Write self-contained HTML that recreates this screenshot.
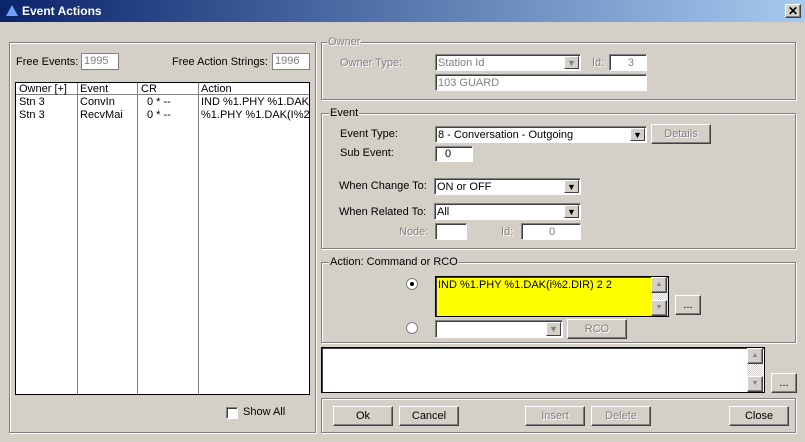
<!DOCTYPE html>
<html><head><style>
*{box-sizing:border-box;margin:0;padding:0}
body{width:805px;height:442px;background:#d4d0c8;font:11px "Liberation Sans",sans-serif;position:relative;overflow:hidden;color:#000}
.a{position:absolute}
.title{left:0;top:0;width:805px;height:22px;background:linear-gradient(90deg,#0a246a,#a6caf0);color:#fff;font-weight:bold;font-size:12px;line-height:22px;padding-left:22px}
.grp{border:1px solid #808080;box-shadow:1px 1px 0 #fff,inset 1px 1px 0 #fff}
.lg{background:#d4d0c8;padding:0 1px;line-height:12px}
.in{background:#fff;border:1px solid #808080;border-right-color:#fff;border-bottom-color:#fff;box-shadow:inset 1px 1px 0 #404040;line-height:16px;padding-left:2px;white-space:nowrap;overflow:hidden}
.dis{color:#808080}
.btn{background:#d4d0c8;border:1px solid;border-color:#fff #404040 #404040 #fff;box-shadow:inset -1px -1px 0 #808080;text-align:center;line-height:18px}
.dd{position:absolute;right:1px;top:1px;bottom:1px;width:15px;background:#d4d0c8;border:1px solid;border-color:#fff #404040 #404040 #fff;font-size:9px;text-align:center;line-height:13px}
.gt{color:#808080;text-shadow:1px 1px 0 #fff}
</style></head><body>
<div class="a title">Event Actions</div>
<div class="a" style="left:6px;top:5px;width:0;height:0;border-left:6px solid transparent;border-right:6px solid transparent;border-bottom:11px solid #6fa0ff"></div>
<div class="a btn" style="left:785px;top:4px;width:16px;height:14px;line-height:12px;font-weight:bold;font-size:12px">✕</div>

<div class="a grp" style="left:9px;top:42px;width:307px;height:391px"></div>
<div class="a" style="left:16px;top:56px">Free Events:</div>
<div class="a in dis" style="left:81px;top:53px;width:38px;height:17px;box-shadow:none;border:1px solid #808080;line-height:15px">1995</div>
<div class="a" style="left:172px;top:56px">Free Action Strings:</div>
<div class="a in dis" style="left:272px;top:53px;width:38px;height:17px;box-shadow:none;border:1px solid #808080;line-height:15px">1996</div>
<div class="a" style="left:15px;top:82px;width:295px;height:313px;background:#fff;border:1px solid #000"></div>
<div class="a" style="left:16px;top:83px;width:293px;height:12px;border-bottom:1px solid #808080"></div>
<div class="a" style="left:77px;top:83px;width:1px;height:311px;background:#808080"></div>
<div class="a" style="left:137px;top:83px;width:1px;height:311px;background:#808080"></div>
<div class="a" style="left:198px;top:83px;width:1px;height:311px;background:#808080"></div>
<div class="a" style="left:19px;top:82px;line-height:14px">Owner [+]</div>
<div class="a" style="left:80px;top:82px;line-height:14px">Event</div>
<div class="a" style="left:141px;top:82px;line-height:14px">CR</div>
<div class="a" style="left:201px;top:82px;line-height:14px">Action</div>
<div class="a" style="left:19px;top:96px;line-height:13px">Stn 3<br>Stn 3</div>
<div class="a" style="left:80px;top:96px;line-height:13px">ConvIn<br>RecvMai</div>
<div class="a" style="left:147px;top:96px;line-height:13px">0 * --<br>0 * --</div>
<div class="a" style="left:201px;top:96px;width:108px;overflow:hidden;white-space:nowrap;line-height:13px">IND %1.PHY %1.DAK(I<br>%1.PHY %1.DAK(I%2.I</div>
<div class="a" style="left:226px;top:407px;width:12px;height:12px;background:#fff;border:1px solid;border-color:#808080 #fff #fff #808080;box-shadow:inset 1px 1px 0 #404040"></div>
<div class="a" style="left:243px;top:406px">Show All</div>

<!-- Owner -->
<div class="a grp" style="left:321px;top:42px;width:475px;height:58px"></div>
<div class="a lg gt" style="left:327px;top:36px">Owner</div>
<div class="a gt" style="left:340px;top:57px">Owner Type:</div>
<div class="a in dis" style="left:435px;top:54px;width:146px;height:17px">Station Id<div class="dd" style="color:#808080">▼</div></div>
<div class="a gt" style="left:592px;top:57px">Id:</div>
<div class="a in dis" style="left:609px;top:54px;width:38px;height:17px;text-align:right;padding-right:12px">3</div>
<div class="a in dis" style="left:435px;top:74px;width:212px;height:17px">103 GUARD</div>

<!-- Event -->
<div class="a grp" style="left:321px;top:113px;width:475px;height:136px"></div>
<div class="a lg" style="left:329px;top:107px">Event</div>
<div class="a" style="left:340px;top:128px">Event Type:</div>
<div class="a in" style="left:435px;top:126px;width:212px;height:17px">8 - Conversation - Outgoing<div class="dd">▼</div></div>
<div class="a btn gt" style="left:651px;top:124px;width:60px;height:20px">Details</div>
<div class="a" style="left:340px;top:147px">Sub Event:</div>
<div class="a in" style="left:435px;top:146px;width:38px;height:16px;padding-left:9px;line-height:15px">0</div>
<div class="a" style="left:339px;top:180px">When Change To:</div>
<div class="a in" style="left:434px;top:178px;width:147px;height:17px">ON or OFF<div class="dd">▼</div></div>
<div class="a" style="left:339px;top:206px">When Related To:</div>
<div class="a in" style="left:434px;top:203px;width:147px;height:17px">All<div class="dd">▼</div></div>
<div class="a gt" style="left:399px;top:226px">Node:</div>
<div class="a in" style="left:435px;top:223px;width:32px;height:17px"></div>
<div class="a gt" style="left:501px;top:226px">Id:</div>
<div class="a in dis" style="left:521px;top:223px;width:60px;height:17px;text-align:center">0</div>

<!-- Action -->
<div class="a grp" style="left:321px;top:262px;width:475px;height:81px"></div>
<div class="a lg" style="left:329px;top:256px">Action: Command or RCO</div>
<div class="a" style="left:406px;top:278px;width:12px;height:12px;border-radius:50%;background:#fff;border:1px solid #808080"><div style="position:absolute;left:3px;top:3px;width:4px;height:4px;border-radius:50%;background:#000"></div></div>
<div class="a in" style="left:435px;top:276px;width:234px;height:41px;background:#ff0;border-color:#000">IND %1.PHY %1.DAK(i%2.DIR) 2 2
<div class="a" style="right:1px;top:0;width:16px;height:39px;background:repeating-conic-gradient(#d4d0c8 0 25%,#fff 0 50%) 0 0/2px 2px"><div class="btn" style="height:16px;font-size:7px;line-height:14px;color:#808080">▲</div><div class="btn" style="height:16px;margin-top:7px;font-size:7px;line-height:14px;color:#808080">▼</div></div></div>
<div class="a btn" style="left:675px;top:295px;width:26px;height:20px">...</div>
<div class="a" style="left:406px;top:322px;width:12px;height:12px;border-radius:50%;background:#fff;border:1px solid #808080"></div>
<div class="a in" style="left:435px;top:320px;width:128px;height:18px"><div class="dd" style="color:#808080">▼</div></div>
<div class="a btn gt" style="left:567px;top:319px;width:60px;height:20px">RCO</div>

<div class="a in" style="left:321px;top:347px;width:444px;height:46px;border-color:#000">
<div class="a" style="right:1px;top:0;width:16px;height:44px;background:repeating-conic-gradient(#d4d0c8 0 25%,#fff 0 50%) 0 0/2px 2px"><div class="btn" style="height:16px;font-size:7px;line-height:14px;color:#808080">▲</div><div class="btn" style="height:16px;margin-top:12px;font-size:7px;line-height:14px;color:#808080">▼</div></div></div>
<div class="a btn" style="left:771px;top:373px;width:26px;height:20px">...</div>

<div class="a grp" style="left:321px;top:398px;width:475px;height:35px"></div>
<div class="a btn" style="left:333px;top:406px;width:60px;height:20px">Ok</div>
<div class="a btn" style="left:399px;top:406px;width:60px;height:20px">Cancel</div>
<div class="a btn gt" style="left:525px;top:406px;width:60px;height:20px">Insert</div>
<div class="a btn gt" style="left:591px;top:406px;width:60px;height:20px">Delete</div>
<div class="a btn" style="left:729px;top:406px;width:60px;height:20px">Close</div>
</body></html>
